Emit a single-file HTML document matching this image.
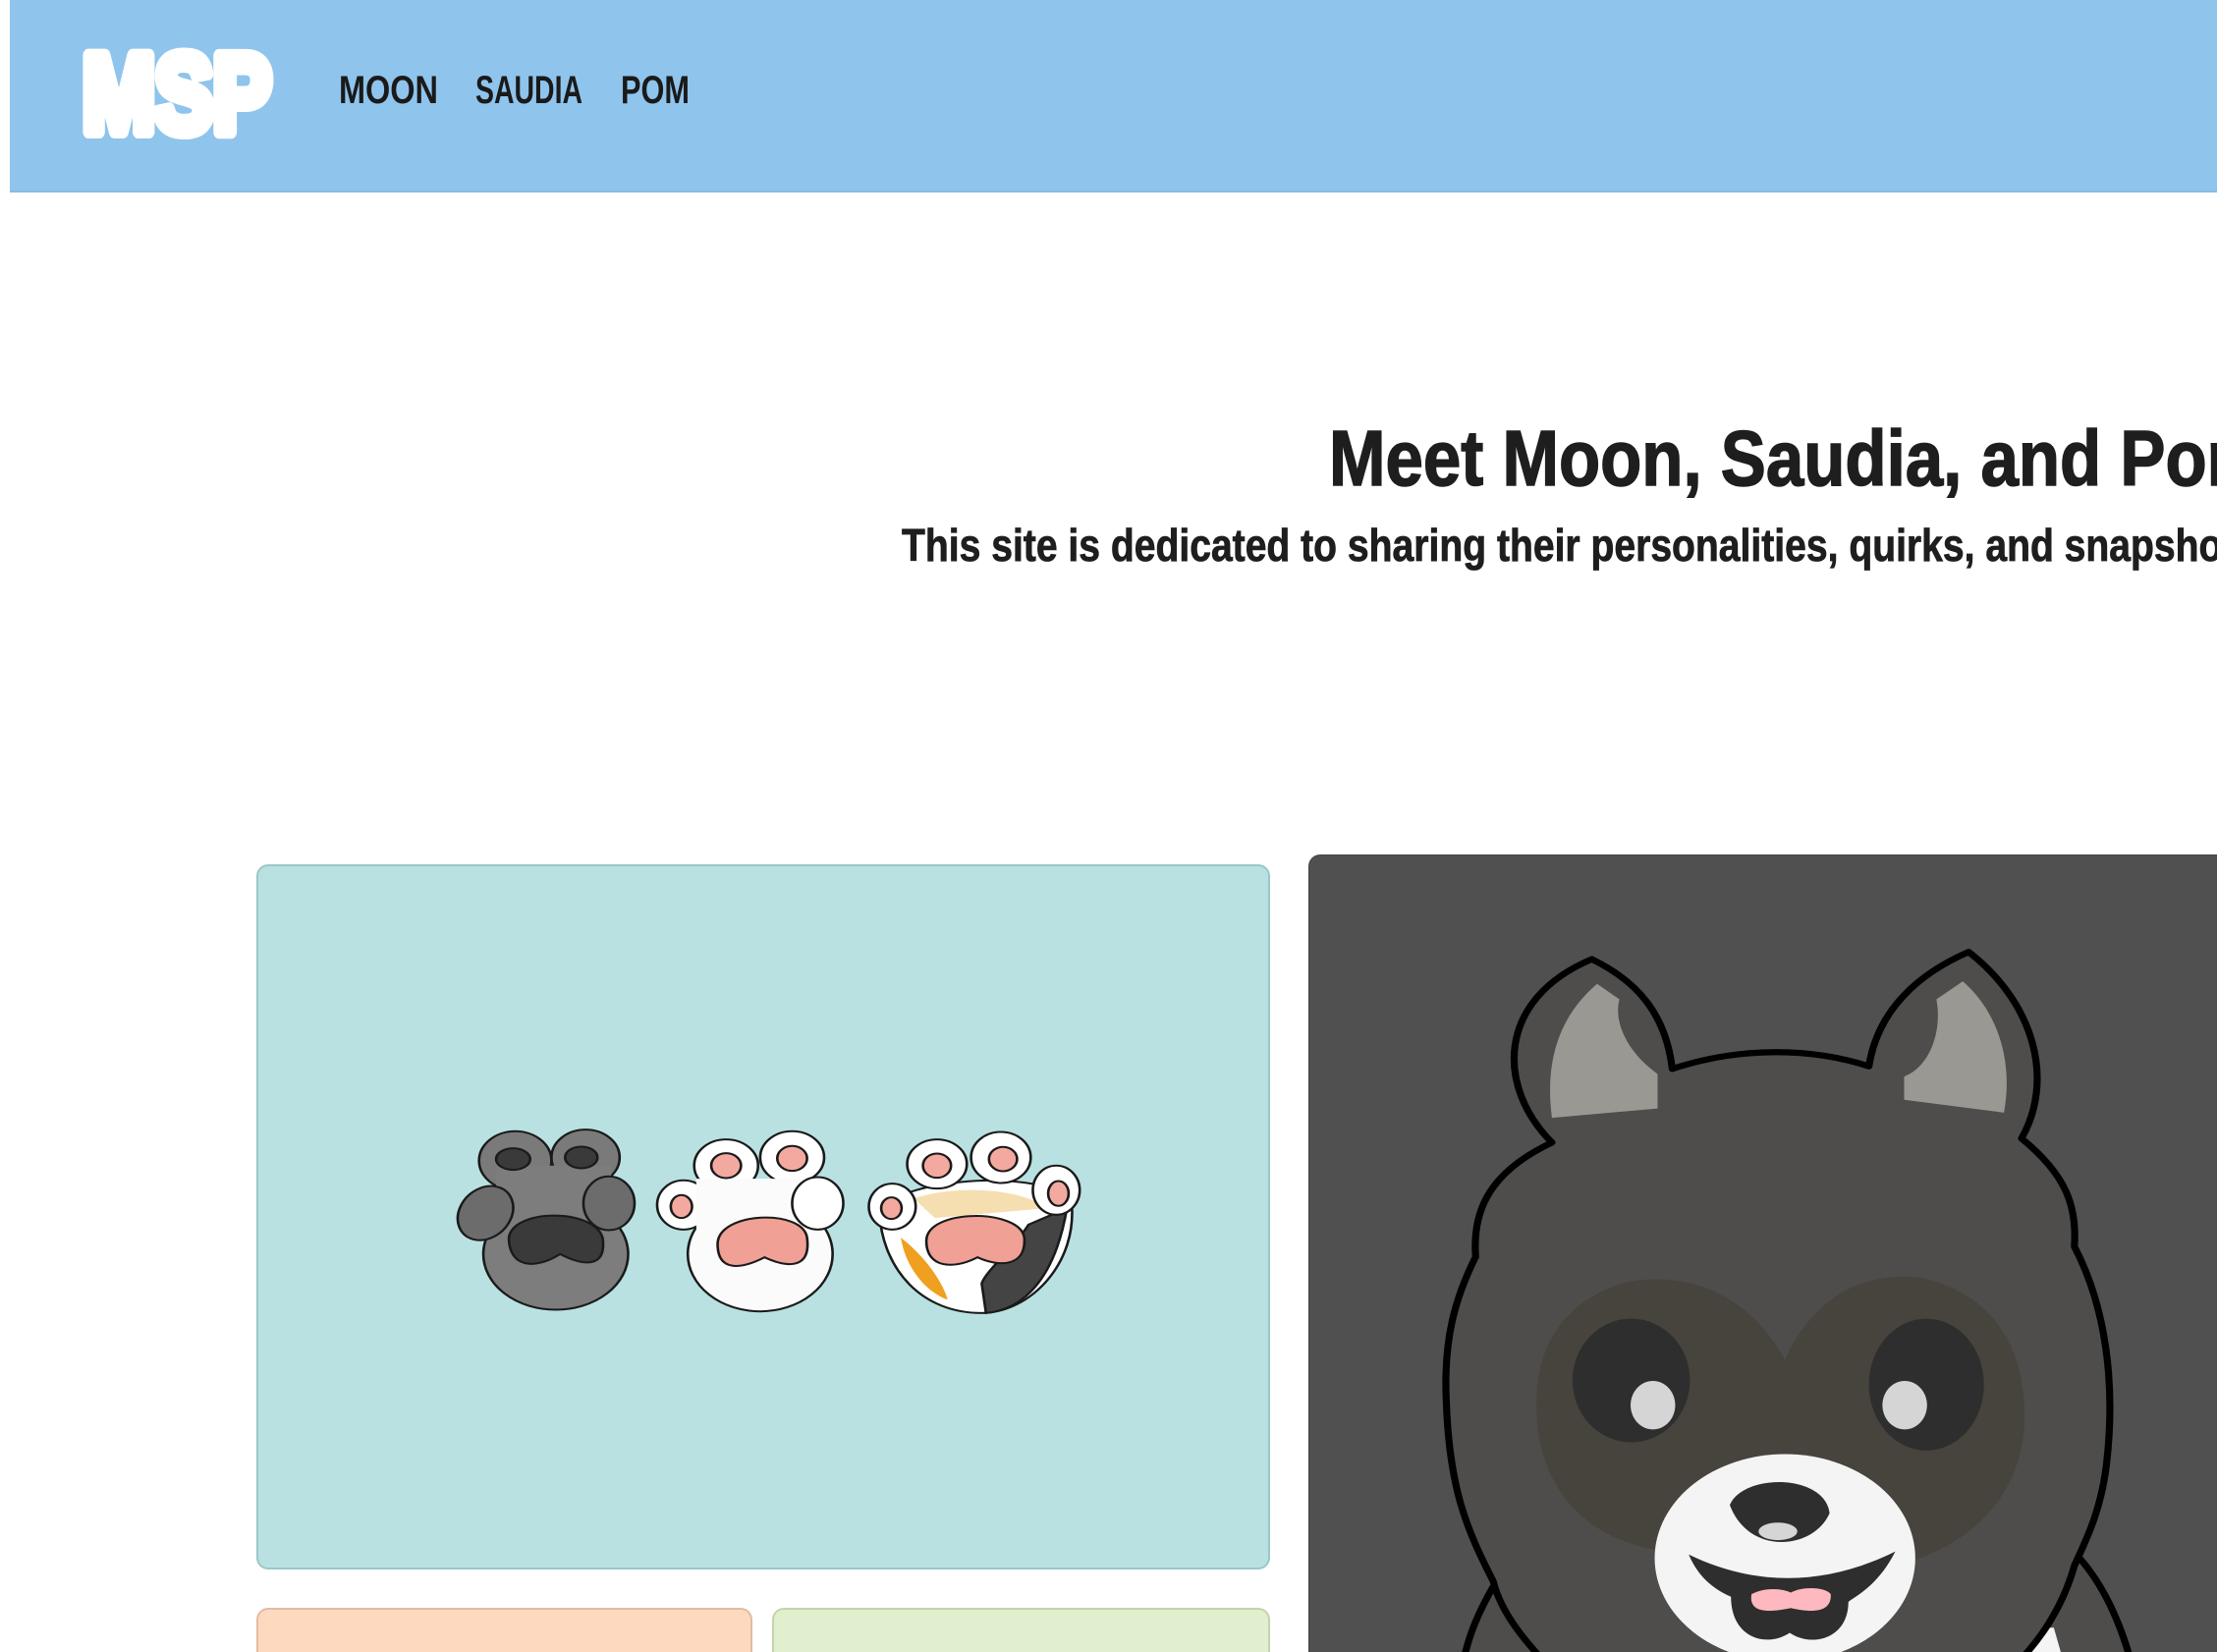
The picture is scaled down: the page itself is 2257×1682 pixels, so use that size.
<!DOCTYPE html>
<html><head><meta charset="utf-8">
<style>
html,body{margin:0;padding:0;background:#fff;width:2257px;height:1682px;overflow:hidden;position:relative;font-family:"Liberation Sans",sans-serif}
.hdr{position:absolute;left:10px;top:0;width:2247px;height:194px;background:#8fc4ec;border-bottom:2px solid #86bde8}
.card{position:absolute;border-radius:12px;box-sizing:border-box}
svg{position:absolute}
</style></head><body>
<div class="hdr"></div>
<svg style="left:0;top:0" width="2257" height="200">
  <text x="84" y="134" font-family="Liberation Sans" font-weight="bold" font-size="112" fill="#fff" stroke="#fff" stroke-width="14" stroke-linejoin="round" textLength="192" lengthAdjust="spacingAndGlyphs">MSP</text>
  <g font-family="Liberation Sans" font-weight="bold" font-size="40" fill="#1a1a1a">
    <text x="345" y="105" textLength="101" lengthAdjust="spacingAndGlyphs">MOON</text>
    <text x="484" y="105" textLength="109" lengthAdjust="spacingAndGlyphs">SAUDIA</text>
    <text x="632" y="105" textLength="70" lengthAdjust="spacingAndGlyphs">POM</text>
  </g>
</svg>
<svg style="left:0;top:400" width="2257" height="200">
  <text x="1353" y="94" font-family="Liberation Sans" font-weight="bold" font-size="80" fill="#1e1e1e" stroke="#1e1e1e" stroke-width="1.5" textLength="955" lengthAdjust="spacingAndGlyphs">Meet Moon, Saudia, and Pom</text>
  <text x="918" y="171" font-family="Liberation Sans" font-weight="bold" font-size="46" fill="#1e1e1e" stroke="#1e1e1e" stroke-width="0.8" textLength="1390" lengthAdjust="spacingAndGlyphs">This site is dedicated to sharing their personalities, quirks, and snapshots.</text>
</svg>

<div class="card" style="left:261px;top:880px;width:1032px;height:718px;background:#b9e1e1;border:2px solid #9cc7c7"></div>
<div class="card" style="left:261px;top:1637px;width:505px;height:45px;background:#fdd9c0;border:2px solid #e2bca4;border-bottom:none;border-radius:12px 12px 0 0"></div>
<div class="card" style="left:786px;top:1637px;width:507px;height:45px;background:#e1efcf;border:2px solid #c3d4ad;border-bottom:none;border-radius:12px 12px 0 0"></div>
<div class="card" style="left:1332px;top:870px;width:925px;height:812px;background:#505050;border:1px solid #444;border-right:none;border-bottom:none;border-radius:12px 0 0 0"></div>

<!-- paws -->
<svg style="left:440px;top:1120px" width="680" height="240" viewBox="0 0 1568 553">
 <g stroke="#1a1a1a" stroke-width="6" transform="scale(1,0.769)">
  <ellipse cx="290" cy="470" rx="170" ry="170" fill="#7d7d7d"/>
  <ellipse cx="195" cy="185" rx="85" ry="90" fill="#7a7a7a"/>
  <ellipse cx="360" cy="175" rx="80" ry="85" fill="#7a7a7a"/>
  <rect x="150" y="200" width="270" height="230" fill="#7d7d7d" stroke="none"/>
  <ellipse cx="190" cy="180" rx="40" ry="33" fill="#3a3a3a"/>
  <ellipse cx="350" cy="175" rx="38" ry="33" fill="#3a3a3a"/>
  <ellipse cx="125" cy="345" rx="62" ry="85" fill="#6c6c6c" transform="rotate(20 125 345)"/>
  <ellipse cx="415" cy="315" rx="60" ry="82" fill="#6c6c6c"/>
  <path d="M180 420 C190 330 380 330 400 420 C410 510 360 510 300 470 C240 520 180 510 180 420Z" fill="#3a3a3a"/>
  <ellipse cx="770" cy="470" rx="170" ry="175" fill="#fbfbfb"/>
  <ellipse cx="690" cy="200" rx="75" ry="80" fill="#fff"/>
  <ellipse cx="845" cy="175" rx="75" ry="80" fill="#fff"/>
  <ellipse cx="590" cy="320" rx="62" ry="75" fill="#fff"/>
  <rect x="620" y="240" width="300" height="200" fill="#fbfbfb" stroke="none"/>
  <ellipse cx="690" cy="200" rx="35" ry="38" fill="#f4a9a0"/>
  <ellipse cx="845" cy="178" rx="35" ry="38" fill="#f4a9a0"/>
  <ellipse cx="585" cy="325" rx="25" ry="35" fill="#f4a9a0"/>
  <ellipse cx="905" cy="315" rx="60" ry="80" fill="#fff"/>
  <path d="M670 440 C670 340 870 330 880 420 C890 520 830 510 780 480 C720 520 670 520 670 440Z" fill="#f0a094"/>
  <path d="M1050 350 C1060 250 1400 200 1500 300 C1520 500 1400 650 1290 650 C1150 650 1060 520 1050 350Z" fill="#fff"/>
  <path d="M1300 650 C1380 640 1460 560 1490 330 L1400 380 C1360 460 1300 520 1290 560Z" fill="#444"/>
  <path d="M1100 420 C1160 480 1200 560 1210 610 C1150 580 1110 500 1100 420Z" fill="#f0a020" stroke="none"/>
  <path d="M1130 300 C1250 250 1400 280 1440 330 L1180 360Z" fill="#f5dfb0" stroke="none"/>
  <ellipse cx="1185" cy="195" rx="70" ry="75" fill="#fff"/>
  <ellipse cx="1335" cy="175" rx="70" ry="78" fill="#fff"/>
  <ellipse cx="1080" cy="325" rx="55" ry="70" fill="#fff"/>
  <ellipse cx="1465" cy="275" rx="55" ry="75" fill="#fff"/>
  <ellipse cx="1185" cy="200" rx="33" ry="37" fill="#f4a9a0"/>
  <ellipse cx="1340" cy="180" rx="33" ry="37" fill="#f4a9a0"/>
  <ellipse cx="1078" cy="330" rx="24" ry="33" fill="#f4a9a0"/>
  <ellipse cx="1470" cy="285" rx="24" ry="38" fill="#f4a9a0"/>
  <path d="M1160 430 C1160 330 1380 330 1390 420 C1395 510 1330 510 1280 480 C1220 520 1160 510 1160 430Z" fill="#f0a094"/>
 </g>
</svg>

<!-- dog -->
<svg style="left:1320px;top:860px" width="937" height="822" viewBox="0 0 1568 1375">
 <g transform="scale(1,0.8775)">
 <path d="M335 1440 C310 1490 295 1530 285 1580 L1420 1580 C1400 1500 1370 1430 1330 1380" fill="#4e4d4b" stroke="#000" stroke-width="12"/>
 <path d="M400 1580 L420 1530 L1290 1520 L1305 1580 Z" fill="#f4f4f4"/>
 <path d="M435 578 C340 470 340 300 503 222 C590 270 630 340 640 435 C760 390 880 395 975 430 C990 320 1060 250 1145 208 C1260 310 1290 460 1235 570 C1310 640 1330 700 1325 780 C1380 900 1395 1050 1380 1200 C1370 1300 1340 1360 1325 1400 C1300 1500 1250 1568 1200 1620 L450 1620 C400 1560 350 1500 335 1430 C290 1330 260 1250 255 1080 C250 960 270 880 305 800 C300 720 320 640 435 578 Z" fill="#4e4d4b" stroke="#000" stroke-width="12" stroke-linejoin="round"/>
 <path d="M435 530 C420 400 460 320 512 270 L550 300 C540 340 560 400 615 445 L615 512 Z" fill="#9a9892"/>
 <path d="M1035 495 L1035 450 C1080 430 1100 360 1090 300 L1135 265 C1200 330 1220 430 1205 520 Z" fill="#9a9892"/>
 <path d="M832 1000 C760 850 640 830 560 850 C440 890 400 1000 410 1120 C420 1260 500 1350 620 1370 L1050 1390 C1180 1340 1240 1230 1240 1110 C1240 980 1190 870 1060 840 C960 830 880 880 832 1000 Z" fill="#47433d"/>
 <ellipse cx="570" cy="1040" rx="100" ry="120" fill="#2e2e2e"/>
 <ellipse cx="1073" cy="1048" rx="98" ry="128" fill="#2e2e2e"/>
 <ellipse cx="607" cy="1088" rx="38" ry="47" fill="#d5d5d5"/>
 <ellipse cx="1036" cy="1088" rx="38" ry="47" fill="#d5d5d5"/>
 <ellipse cx="832" cy="1385" rx="222" ry="202" fill="#f4f4f4"/>
 <path d="M738 1282 C760 1220 900 1220 908 1298 C880 1370 770 1380 738 1282 Z" fill="#2e2e2e"/>
 <ellipse cx="820" cy="1333" rx="33" ry="17" fill="#d5d5d5"/>
 <path d="M668 1378 C780 1440 900 1440 1020 1372 C990 1440 950 1460 940 1470 C940 1540 880 1560 840 1530 C800 1560 740 1540 740 1460 C700 1440 680 1410 668 1378 Z" fill="#2e2e2e"/>
 <path d="M775 1455 C800 1440 830 1445 842 1452 C860 1440 900 1440 910 1455 C912 1490 880 1492 842 1482 C800 1492 770 1490 775 1455 Z" fill="#fdb8c0"/>
 </g>
</svg>
</body></html>
